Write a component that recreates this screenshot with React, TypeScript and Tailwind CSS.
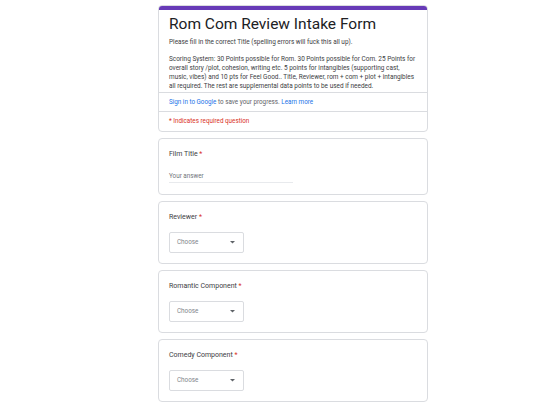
import React from "react";

function Req() {
  return <span className="text-[#d93025]"> *</span>;
}

function Dropdown() {
  return (
    <div className="mt-[10px] flex h-[21px] w-[75px] items-center justify-between rounded-[2px] border border-[#dadce0] pl-[7px] pr-[8px]">
      <span className="text-[6.3px] text-[#80868b]">Choose</span>
      <svg width="5" height="3" viewBox="0 0 5 3">
        <path d="M0 0 L5 0 L2.5 2.5 Z" fill="#5f6368" />
      </svg>
    </div>
  );
}

function Question({ label }: { label: string }) {
  return (
    <div className="h-[63px] rounded-[4px] border border-[#dadce0] bg-white px-[10px] pt-[10px]">
      <div className="text-[7px] leading-[10px] text-[#3c4043]">
        {label}
        <Req />
      </div>
      <Dropdown />
    </div>
  );
}

export default function App() {
  return (
    <div
      className="flex min-h-[405px] w-[540px] bg-white pl-[158px] pt-[5px]"
      style={{ fontFamily: "Roboto, 'Liberation Sans', sans-serif" }}
    >
      <div className="flex w-[270px] flex-col gap-[6px]">
        <div className="overflow-hidden rounded-[4px] border border-[#dadce0] bg-white">
          <div className="h-[4px] bg-[#673ab7]" />
          <div className="px-[10px] pb-[2px] pt-[4px]">
            <div className="text-[15.5px] leading-[20px] text-[#202124]">Rom Com Review Intake Form</div>
            <div className="mt-[4px] text-[6.45px] leading-[8.7px] text-[#3c4043]">
              Please fill in the correct Title (spelling errors will fuck this all up).
            </div>
            <div className="mt-[8.7px] text-[6.45px] leading-[8.7px] text-[#3c4043]">
              Scoring System: 30 Points possible for Rom. 30 Points possible for Com. 25 Points for overall story /plot, cohesion, writing etc. 5 points for intangibles (supporting cast, music, vibes) and 10 pts for Feel Good.. Title, Reviewer, rom + com + plot + intangibles all required. The rest are supplemental data points to be used if needed.
            </div>
          </div>
          <div className="border-t border-[#dadce0] px-[10px] py-[5px] text-[6.3px] leading-[8px] text-[#5f6368]">
            <span className="text-[#1a73e8]">Sign in to Google</span> to save your progress.{" "}
            <span className="text-[#1a73e8]">Learn more</span>
          </div>
          <div className="border-t border-[#dadce0] px-[10px] pb-[6px] pt-[5px] text-[6.3px] leading-[8px] text-[#d93025]">
            * Indicates required question
          </div>
        </div>

        <div className="h-[57px] rounded-[4px] border border-[#dadce0] bg-white px-[10px] pt-[10px]">
          <div className="text-[7px] leading-[10px] text-[#3c4043]">
            Film Title
            <Req />
          </div>
          <div className="mt-[13px] w-[124px] border-b border-[#e8eaed] pb-[2px] text-[6.3px] leading-[8px] text-[#70757a]">
            Your answer
          </div>
        </div>

        <Question label="Reviewer" />
        <Question label="Romantic Component" />
        <Question label="Comedy Component" />
      </div>
    </div>
  );
}
